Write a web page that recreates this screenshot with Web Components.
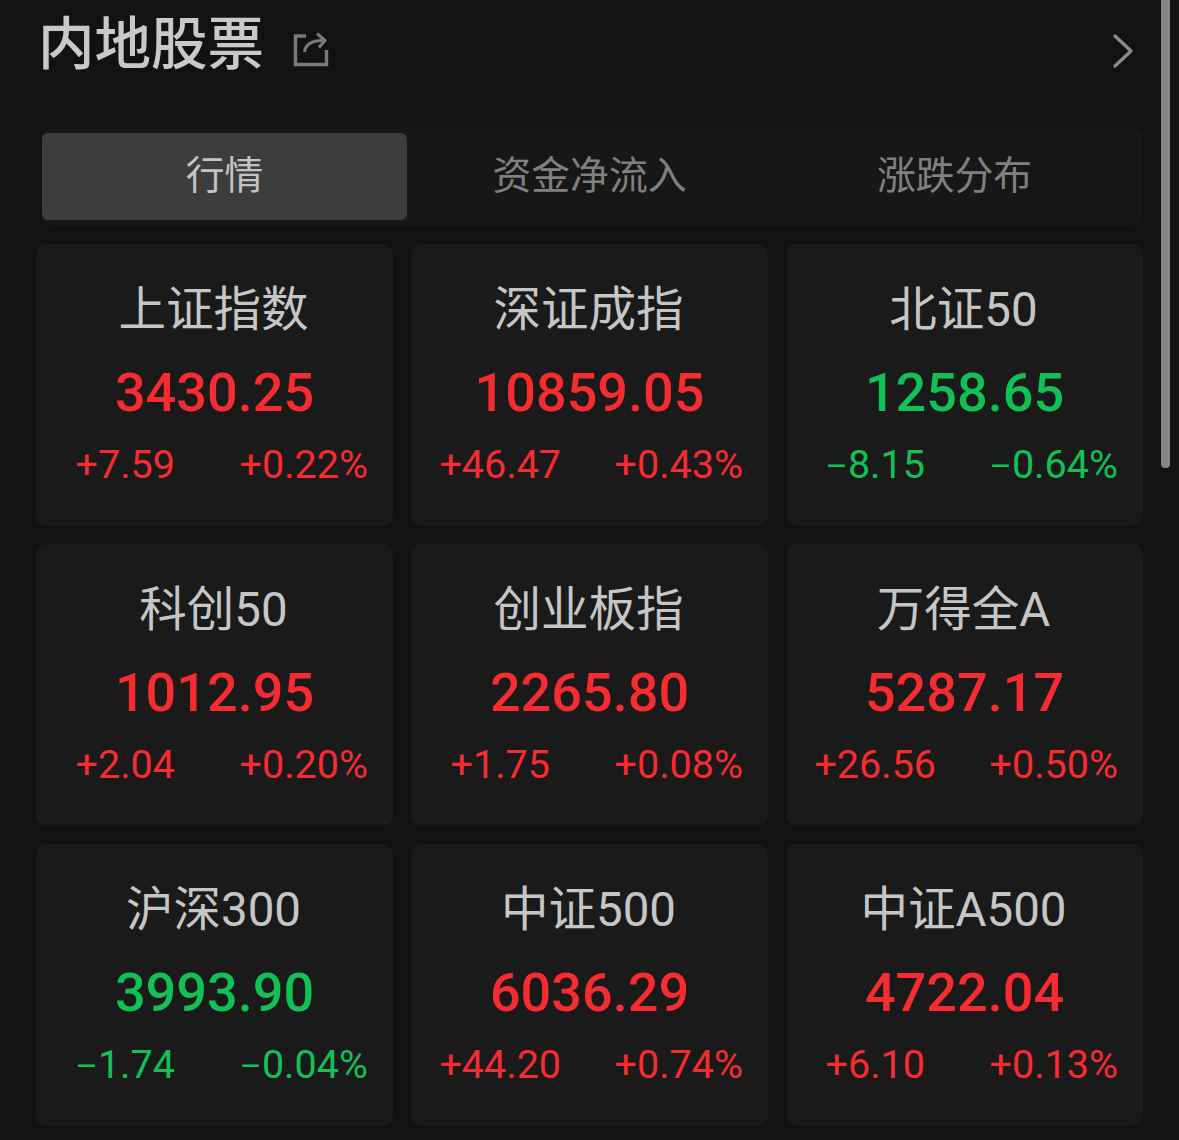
<!DOCTYPE html>
<html lang="zh-CN">
<head>
<meta charset="utf-8">
<title>内地股票</title>
<style>
  html, body { margin: 0; height: 1140px; overflow: hidden; background: #121212; }
  body { font-family: Roboto, "Noto Sans CJK SC", sans-serif; }
</style>
</head>
<body>
<market-panel>
  <panel-header title="内地股票"></panel-header>
  <tab-bar tabs="行情,资金净流入,涨跌分布"></tab-bar>
  <quote-grid>
    <quote-card name="上证指数" price="3430.25" change="+7.59" pct="+0.22%"></quote-card>
    <quote-card name="深证成指" price="10859.05" change="+46.47" pct="+0.43%"></quote-card>
    <quote-card name="北证50" price="1258.65" change="-8.15" pct="-0.64%"></quote-card>
    <quote-card name="科创50" price="1012.95" change="+2.04" pct="+0.20%"></quote-card>
    <quote-card name="创业板指" price="2265.80" change="+1.75" pct="+0.08%"></quote-card>
    <quote-card name="万得全A" price="5287.17" change="+26.56" pct="+0.50%"></quote-card>
    <quote-card name="沪深300" price="3993.90" change="-1.74" pct="-0.04%"></quote-card>
    <quote-card name="中证500" price="6036.29" change="+44.20" pct="+0.74%"></quote-card>
    <quote-card name="中证A500" price="4722.04" change="+6.10" pct="+0.13%"></quote-card>
  </quote-grid>
</market-panel>
<script>
const FONT = 'Roboto, "Noto Sans CJK SC", sans-serif';

// page frame + scroll thumb
class MarketPanel extends HTMLElement {
  constructor() {
    super();
    this.attachShadow({ mode: "open" }).innerHTML = `
      <style>
        :host { display: block; position: relative; width: 1179px; height: 1140px; box-sizing: border-box; padding: 0 36px; font-family: ${FONT}; }
        .thumb { position: absolute; left: 1161px; top: -10px; width: 9px; height: 478px; background: #868686; border-radius: 0 0 4px 4px; }
      </style>
      <slot></slot>
      <div class="thumb"></div>`;
  }
}

class PanelHeader extends HTMLElement {
  connectedCallback() {
    this.attachShadow({ mode: "open" }).innerHTML = `
      <style>
        :host { display: flex; align-items: center; height: 127px; box-sizing: border-box; padding: 0 9px 39px 2px; color: #c9c9c9; }
        h1 { margin: 2px 0 0; font-size: 56.5px; font-weight: 500; line-height: 88px; white-space: nowrap; }
        .share { margin-left: 29px; margin-top: 10px; }
        .chev { margin-left: auto; margin-top: 13px; }
      </style>
      <h1>${this.getAttribute("title")}</h1>
      <svg class="share" width="36" height="36" viewBox="0 0 36 36" fill="none" stroke="#7a7a7a" stroke-width="3.4">
        <path d="M13 5H2.5v28.5h31V19"/>
        <path d="M11.5 21c1-7 6-11.500 18-11.500" stroke-width="3"/>
        <path d="M24 2.500l8 7-6 7" stroke-width="3"/>
      </svg>
      <svg class="chev" width="22" height="36" viewBox="0 0 22 36" fill="none" stroke="#8a8a8a" stroke-width="3.4" stroke-linecap="round" stroke-linejoin="round">
        <path d="M3 3l16 15L3 33"/>
      </svg>`;
  }
}

class TabBar extends HTMLElement {
  connectedCallback() {
    const tabs = this.getAttribute("tabs").split(",");
    this.attachShadow({ mode: "open" }).innerHTML = `
      <style>
        :host { display: grid; grid-template-columns: repeat(3, 365px); height: 99px; box-sizing: border-box; margin: 0 0 18px 6px; padding: 6px 6px 6px 0; width: 1101px; background: #171717; border-radius: 12px; }
        div { display: flex; align-items: center; justify-content: center; font-size: 38.8px; color: #808080; border-radius: 6px; height: 87px; box-sizing: border-box; padding-bottom: 9px; }
        div.on { background: #3d3d3d; color: #c4c4c4; }
      </style>
      ${tabs.map((t, i) => `<div class="${i === 0 ? "on" : ""}">${t}</div>`).join("")}`;
  }
}

class QuoteGrid extends HTMLElement {
  constructor() {
    super();
    this.attachShadow({ mode: "open" }).innerHTML = `
      <style>
        :host { display: grid; grid-template-columns: repeat(3, 357px); grid-auto-rows: 282px; gap: 18px; }
      </style>
      <slot></slot>`;
  }
}

class QuoteCard extends HTMLElement {
  connectedCallback() {
    const down = this.getAttribute("change").startsWith("-");
    // the minus in the reference is short, so it gets a smaller size of its own
    const sign = s => s.replace("-", '<i>\u2013</i>');
    this.attachShadow({ mode: "open" }).innerHTML = `
      <style>
        :host { display: flex; flex-direction: column; align-items: center; background: #1a1a1a; border-radius: 10px; padding: 33px 2px 0 0; box-sizing: border-box; color: ${down ? "#12c155" : "#f72c31"}; }
        .name { font-size: 47.5px; line-height: 66px; color: #c6c6c6; white-space: nowrap; }
        .price { font-size: 54px; line-height: 64px; font-weight: 500; margin: 18px 0 0 2px; white-space: nowrap; }
        .row { display: grid; grid-template-columns: 1fr 1fr; align-self: flex-start; width: 357px; margin-top: 15px; font-size: 39.5px; line-height: 50px; white-space: nowrap; }
        .row span { text-align: center; }
        i { font-style: normal; font-size: 34px; }
      </style>
      <div class="name">${this.getAttribute("name")}</div>
      <div class="price">${this.getAttribute("price")}</div>
      <div class="row"><span>${sign(this.getAttribute("change"))}</span><span>${sign(this.getAttribute("pct"))}</span></div>`;
  }
}

customElements.define("market-panel", MarketPanel);
customElements.define("panel-header", PanelHeader);
customElements.define("tab-bar", TabBar);
customElements.define("quote-grid", QuoteGrid);
customElements.define("quote-card", QuoteCard);
</script>
</body>
</html>
